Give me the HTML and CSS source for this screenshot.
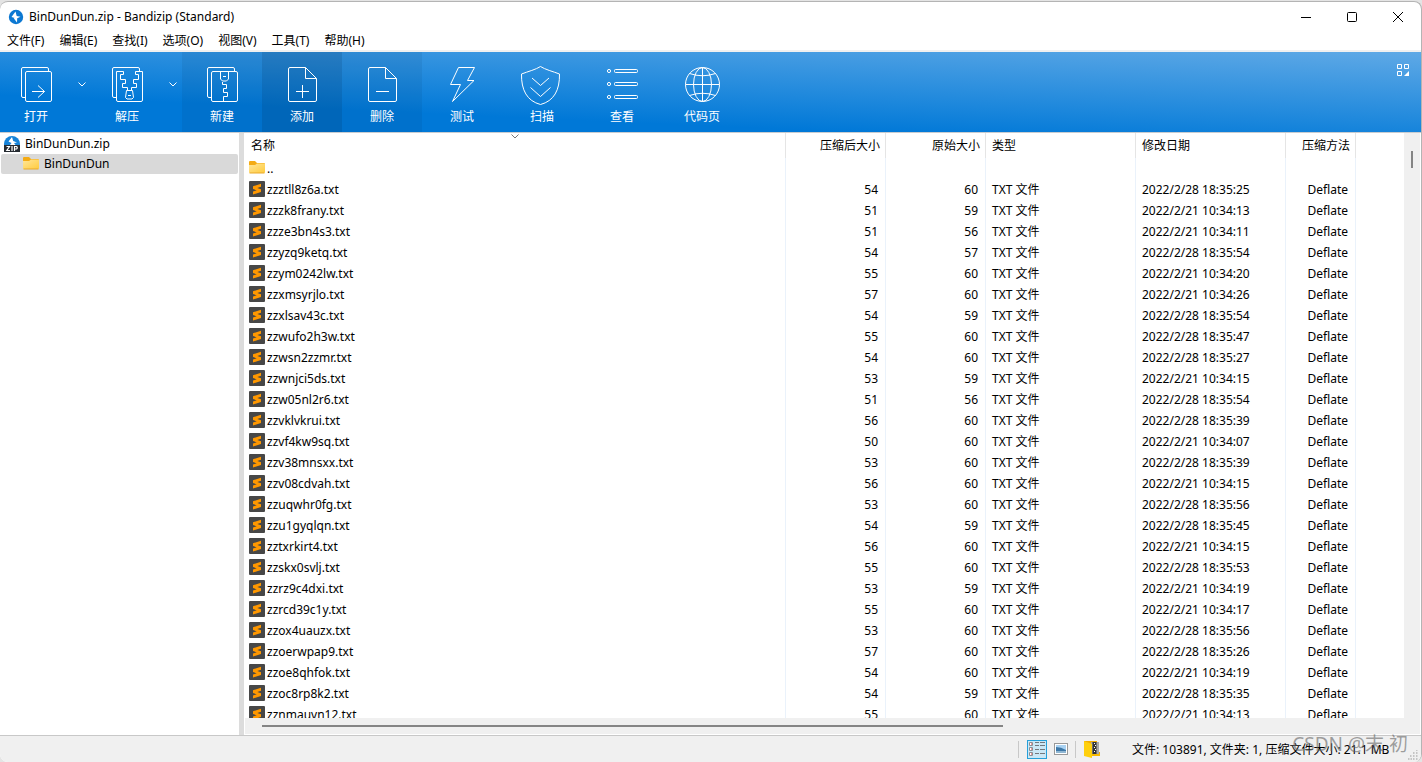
FILE: index.html
```html
<!DOCTYPE html>
<html lang="zh-CN">
<head>
<meta charset="utf-8">
<title>BinDunDun.zip - Bandizip (Standard)</title>
<link rel="stylesheet" href="styles.css">
</head>
<body>
<svg class="defs" aria-hidden="true">
  <defs>
    <linearGradient id="folder-front" x1="0" y1="0" x2="1" y2="1">
      <stop offset="0" stop-color="#ffe69a"/><stop offset="1" stop-color="#ffcb3d"/>
    </linearGradient>
    <symbol id="folder" viewBox="0 0 16 16">
      <path d="M0 2a1 1 0 0 1 1-1h5l2 2h7a1 1 0 0 1 1 1v6H0z" fill="#f4ab14"/>
      <path d="M0 5h6l2-1.500h8V12a1 1 0 0 1-1 1H1a1 1 0 0 1-1-1z" fill="url(#folder-front)"/>
      <path d="M.5 13h15" stroke="#e9a92b"/>
    </symbol>
    <symbol id="sublime" viewBox="0 0 16 16">
      <rect width="16" height="16" rx="1" fill="#474747"/>
      <path d="M4 5.200 12 2.800v3L8.300 7 12 8.200v2.900l-8 2.400v-3l3.700-1.200L4 8.100z" fill="#ff9800"/>
    </symbol>
    <symbol id="bolt" viewBox="0 0 16 16">
      <circle cx="8" cy="8" r="7.200" fill="#0c78d2"/>
      <path d="M7.500 2.500 3.500 8l3.200 1-1 .2L9 13.500l.2-4.300 3.300-1.400-3.800-.8z" fill="#fff"/>
    </symbol>
  </defs>
</svg>

<div class="window">
  <header class="titlebar">
    <svg class="icon16"><use href="#bolt"/></svg>
    <h1 class="title">BinDunDun.zip - Bandizip (Standard)</h1>
    <div class="caption">
      <button class="caption-btn" aria-label="最小化"><svg viewBox="0 0 12 12"><path d="M1 6.500h10"/></svg></button>
      <button class="caption-btn" aria-label="最大化"><svg viewBox="0 0 12 12"><rect x="1.500" y="1.500" width="9" height="9" rx="1"/></svg></button>
      <button class="caption-btn" aria-label="关闭"><svg viewBox="0 0 12 12"><path d="m1 1 10 10M11 1 1 11"/></svg></button>
    </div>
  </header>

  <nav class="menubar">
    <button>文件(F)</button><button>编辑(E)</button><button>查找(I)</button><button>选项(O)</button><button>视图(V)</button><button>工具(T)</button><button>帮助(H)</button>
  </nav>

  <div class="toolbar">
    <button class="tool split">
      <svg viewBox="0 0 40 40"><path d="M9 33.500H7a1.500 1.500 0 0 1-1.500-1.500V5A1.500 1.500 0 0 1 7 3.500h24A1.500 1.500 0 0 1 32.500 5v2"/><rect x="9.500" y="7.500" width="26" height="30" rx="1.500"/><path d="M16 27.500h12.500m-6.500-6 6.500 6-6.500 6"/></svg>
      打开</button>
    <button class="arrow" aria-label="打开选项"><svg viewBox="0 0 8 5"><path d="m.5.5 3.500 3.500 3.500-3.500"/></svg></button>
    <button class="tool split">
      <svg viewBox="0 0 40 40"><path d="M9 33.500H7a1.500 1.500 0 0 1-1.500-1.500V5A1.500 1.500 0 0 1 7 3.500h24A1.500 1.500 0 0 1 32.500 5v2"/><path d="M16.500 7.500H9.500V36a1.500 1.500 0 0 0 1.500 1.500h23a1.500 1.500 0 0 0 1.500-1.500V7.500h-7v3h3v5h-5v4h3v4h-5v3M16.500 7.500v3h-3v5h5v4h-3v4h5v3"/><path d="M19.500 26.500h6l1 7-1.500 1.500h-5L18.500 33.500z"/><path d="M21 31.500h3"/></svg>
      解压</button>
    <button class="arrow" aria-label="解压选项"><svg viewBox="0 0 8 5"><path d="m.5.5 3.500 3.500 3.500-3.500"/></svg></button>
    <button class="tool near">
      <svg viewBox="0 0 40 40"><path d="M9 33.500H7a1.500 1.500 0 0 1-1.500-1.500V5A1.500 1.500 0 0 1 7 3.500h24A1.500 1.500 0 0 1 32.500 5v2"/><rect x="9.500" y="7.500" width="26" height="30" rx="1.500"/><path d="M18.500 8v7l2 2h4l2-2V8M21 12.500h3M20.500 18v2.500h4v4h-3v4h4v4h-4v5"/></svg>
      新建</button>
    <button class="tool hover">
      <svg viewBox="0 0 40 40"><path d="M23.500 3.500H8A1.500 1.500 0 0 0 6.500 5v31A1.500 1.500 0 0 0 8 37.500h25a1.500 1.500 0 0 0 1.500-1.500V14.500zv11h11M20.500 21v13M14 27.500h13"/></svg>
      添加</button>
    <button class="tool near">
      <svg viewBox="0 0 40 40"><path d="M23.500 3.500H8A1.500 1.500 0 0 0 6.500 5v31A1.500 1.500 0 0 0 8 37.500h25a1.500 1.500 0 0 0 1.500-1.500V14.500zv11h11M14 27.500h13"/></svg>
      删除</button>
    <button class="tool">
      <svg viewBox="0 0 40 40"><path d="M16.500 3.500h16l-7 13h6.500l-21.500 21 8-17h-10z"/></svg>
      测试</button>
    <button class="tool">
      <svg viewBox="0 0 40 40"><path d="M18.500 2.500C23 5.500 31 7.500 37.500 10c.3 16-5.500 27-19 30.500C5 37-.8 26-.5 10 6 7.500 14 5.500 18.500 2.500zM10 14l8.500 7.500L27 14M8.500 23.500l10 9 10-9"/></svg>
      扫描</button>
    <button class="tool">
      <svg viewBox="0 0 40 40"><circle cx="7" cy="7" r="1.600"/><circle cx="7" cy="20" r="1.600"/><circle cx="7" cy="33" r="1.600"/><rect x="12.500" y="5.500" width="23" height="3" rx="1"/><rect x="12.500" y="18.500" width="23" height="3" rx="1"/><rect x="12.500" y="31.500" width="23" height="3" rx="1"/></svg>
      查看</button>
    <button class="tool">
      <svg viewBox="0 0 40 40"><circle cx="20.500" cy="20.500" r="17"/><ellipse cx="20.500" cy="20.500" rx="9" ry="17"/><path d="M20.500 3.500v34M3.500 20.500h34M7.500 9.500q13 4.500 26 0M7.500 31.500q13-4.500 26 0"/></svg>
      代码页</button>
    <button class="skin" aria-label="皮肤"><svg viewBox="0 0 12 12"><path d="M.5.5h4v4h-4zM7.500.5h4v4h-4zM.5 7.500h4v4h-4z"/><path class="solid" d="M12 7v5H7z"/></svg></button>
  </div>

  <main class="content">
    <aside class="tree">
      <div class="node">
        <svg class="icon16" viewBox="0 0 16 16"><path d="M0 8a8 8 0 0 1 16 0v1H0z" fill="#1683d8"/><path d="M8 1 4.500 5.500 7.500 7 6 9h5.500L10 7l3-.5-3.800-1.500z" fill="#fff"/><path d="M0 9h16v7H0z" fill="#252a30"/><path d="M2.500 10.500h3L2.800 14.500H6M8 10v5M10.500 15v-4.500h2q1.500 1.200 0 2.500h-2" fill="none" stroke="#fff" stroke-width="1.200"/></svg>
        <span>BinDunDun.zip</span>
      </div>
      <div class="node child"><svg class="icon16"><use href="#folder"/></svg><span>BinDunDun</span></div>
    </aside>
    <section class="list">
      <div class="viewport">
        <table class="files">
          <colgroup><col><col class="c-size"><col class="c-size"><col class="c-date"><col class="c-date"><col class="c-method"><col class="c-rest"></colgroup>
          <thead><tr>
            <th><span>名称</span><svg class="sort" viewBox="0 0 8 5"><path d="m.5.5 3.500 3.500 3.500-3.500"/></svg></th>
            <th class="num">压缩后大小</th><th class="num">原始大小</th><th>类型</th><th>修改日期</th><th class="num">压缩方法</th><th></th>
          </tr></thead>
          <tbody id="rows">
            <tr><td class="name"><svg class="icon16"><use href="#folder"/></svg>..</td><td></td><td></td><td></td><td></td><td></td><td></td></tr>
          </tbody>
        </table>
      </div>
      <div class="vbar"><i class="vthumb"></i></div>
      <div class="hbar"><i class="hthumb"></i></div>
    </section>
  </main>

  <footer class="status">
    <i class="sep"></i>
    <button class="view on" aria-label="详细信息"><svg viewBox="0 0 18 16"><g fill="#fff" stroke="#8b8f94"><path d="M1.500 1.500h3v3h-3zM1.500 6.500h3v3h-3zM1.500 11.500h3v3h-3z"/></g><path d="M7 1.500h4m1 0h5M7 4.500h4m1 0h5M7 8.500h4m1 0h5M7 12.500h4m1 0h5" stroke="#73787d"/><path d="M3 3h1M3 8h1M3 13h1" stroke="#d33"/></svg></button>
    <button class="view" aria-label="缩略图"><svg viewBox="0 0 18 16"><rect x="2.500" y="2.500" width="13" height="11" fill="#fff" stroke="#999"/><path d="M4 4h10v8H4z" fill="#a9d2f2"/><path d="M4 6q5 0 10 3v3H4z" fill="#3d78a8"/><path d="M4 10h10v2H4z" fill="#8fb6d2"/></svg></button>
    <i class="sep"></i>
    <svg class="archive" viewBox="0 0 18 18"><path d="M1 1h13v11h3v4H1z" fill="#f2ad00"/><path d="M8 2h8v12H8z" fill="#a8a8a8"/><path d="M11.500 2v12" stroke="#333" stroke-width="4"/><path d="M11 3.500h1m0 2h1m-2 2h1m0 2h1m-2 2h1" stroke="#fff"/><path d="m1 1 8 3v14l-8-2z" fill="#ffd00d"/><path d="M9 14h8v2H9z" fill="#f7b900"/></svg>
    <span class="summary">文件: 103891, 文件夹: 1, 压缩文件大小: 21.1 MB</span>
    <svg class="grip" viewBox="0 0 10 10"><path d="M8 0h1.500M5 3h1.500M8 3h1.500M2 6h1.500M5 6h1.500M8 6h1.500M0 9h1.500M2.500 9H4M5 9h1.500M8 9h1.500"/></svg>
    <span class="watermark">CSDN @末&nbsp;初</span>
  </footer>
</div>
<script src="files.js"></script>
</body>
</html>
```
FILE: files.js
```js
// name, packed size, original size, day of February 2022, time
const files = `zzztll8z6a 54 60 28 18:35:25
zzzk8frany 51 59 21 10:34:13
zzze3bn4s3 51 56 21 10:34:11
zzyzq9ketq 54 57 28 18:35:54
zzym0242lw 55 60 21 10:34:20
zzxmsyrjlo 57 60 21 10:34:26
zzxlsav43c 54 59 28 18:35:54
zzwufo2h3w 55 60 28 18:35:47
zzwsn2zzmr 54 60 28 18:35:27
zzwnjci5ds 53 59 21 10:34:15
zzw05nl2r6 51 56 28 18:35:54
zzvklvkrui 56 60 28 18:35:39
zzvf4kw9sq 50 60 21 10:34:07
zzv38mnsxx 53 60 28 18:35:39
zzv08cdvah 56 60 21 10:34:15
zzuqwhr0fg 53 60 28 18:35:56
zzu1gyqlqn 54 59 28 18:35:45
zztxrkirt4 56 60 21 10:34:15
zzskx0svlj 55 60 28 18:35:53
zzrz9c4dxi 53 59 21 10:34:19
zzrcd39c1y 55 60 21 10:34:17
zzox4uauzx 53 60 28 18:35:56
zzoerwpap9 57 60 28 18:35:26
zzoe8qhfok 54 60 21 10:34:19
zzoc8rp8k2 54 59 28 18:35:35
zznmauvn12 55 60 21 10:34:13`;

const rows = files.split('\n').map(line => {
  const [name, packed, size, day, time] = line.split(' ');
  return `<tr><td class="name"><svg class="icon16"><use href="#sublime"/></svg>${name}.txt</td>
    <td class="num">${packed}</td><td class="num">${size}</td><td>TXT 文件</td>
    <td>2022/2/${day} ${time}</td><td class="num">Deflate</td><td></td></tr>`;
});
document.getElementById('rows').insertAdjacentHTML('beforeend', rows.join(''));
```
FILE: styles.css
```css
* { box-sizing: border-box; }
html, body { height: 100%; }
body {
  margin: 0;
  padding-top: 1px;
  background: #e4e4e4;
  color: #000;
  font: 12px/16px "Noto Sans", "Noto Sans CJK SC", sans-serif;
  overflow: hidden;
}
button { border: 0; padding: 0; background: none; color: inherit; font: inherit; }
svg { display: block; flex: none; }
.defs { position: absolute; width: 0; height: 0; }
.icon16 { width: 16px; height: 16px; }

.window {
  display: flex;
  flex-direction: column;
  height: 100%;
  border: 1px solid #b4b4b4;
  border-width: 1px 1px 0 0;
  border-radius: 8px;
  background: #fff;
  overflow: hidden;
}

.titlebar { display: flex; align-items: center; height: 29px; padding-left: 8px; flex: none; }
.title { margin: 0 0 0 5px; font: inherit; flex: 1; }
.caption { display: flex; }
.caption-btn { width: 46px; height: 29px; display: grid; place-items: center; }
.caption-btn svg { width: 12px; height: 12px; fill: none; stroke: #000; }

.menubar {
  display: flex;
  align-items: center;
  gap: 15px;
  height: 21px;
  padding-left: 7px;
  border-bottom: 2px solid #f0f0f0;
  flex: none;
}

.toolbar {
  display: flex;
  height: 81px;
  border-bottom: 1px solid #c8ccd0;
  background: linear-gradient(2.5deg, #0078d7 26%, #1c87dc 48%, #5fa9e6);
  color: #fff;
  flex: none;
}
.tool { display: flex; flex-direction: column; align-items: center; gap: 5px; width: 80px; padding-top: 12px; }
.tool.split { width: 72px; }
.tool svg { width: 40px; height: 40px; overflow: visible; fill: none; stroke: #fff; }
.tool.near { background: rgba(0, 40, 80, .08); }
.tool.hover { background: rgba(0, 40, 80, .22); }
.arrow { display: flex; justify-content: center; width: 19px; padding-top: 30px; }
.arrow svg, .sort { width: 8px; height: 5px; fill: none; stroke: #fff; }
.skin { margin: 12px 12px 0 auto; align-self: flex-start; }
.skin svg { width: 12px; height: 12px; fill: none; stroke: #fff; }
.skin .solid { fill: #fff; stroke: none; }

.content { display: flex; flex: 1; min-height: 0; }
.tree { width: 244px; border-right: 5px solid #dcdcdc; padding: 1px 1px 0; flex: none; }
.node { display: flex; align-items: center; gap: 5px; height: 20px; padding-left: 3px; border-radius: 2px; }
.node.child { padding-left: 22px; background: #d9d9d9; }

.list {
  display: grid;
  grid-template: minmax(0, 1fr) 16px / minmax(0, 1fr) 16px;
  flex: 1;
  min-width: 0;
  padding: 0 1px 1px 1px;
}
.viewport { overflow: hidden; }
.files { width: 100%; table-layout: fixed; border-collapse: separate; border-spacing: 0; }
.c-size { width: 100px; }
.c-date { width: 150px; }
.c-method { width: 70px; }
.c-rest { width: 48px; }
th, td { padding: 0 6px; text-align: left; white-space: nowrap; font-weight: 400; border-right: 1px solid #eaf2fb; }
th { position: relative; height: 25px; border-color: #e5e5e5; }
th:last-child, td:last-child { border: 0; }
td { height: 21px; }
.num { text-align: right; }
th.num { padding-right: 5px; }
td.num { padding-right: 7px; }
.name { display: flex; gap: 2px; padding-left: 4px; line-height: 21px; }
.name svg { margin-top: 2px; }
.sort { position: absolute; top: 1px; left: calc(50% - 4px); stroke: #777; }
.vbar, .hbar { background: #f0f0f0; }
.hbar { grid-column: 1 / 3; display: flex; align-items: center; padding-left: 17px; }
.vbar { display: flex; justify-content: center; padding-top: 18px; }
.vthumb { width: 2px; height: 17px; background: #858585; }
.hthumb { width: 64%; height: 2px; background: #858585; }

.status {
  position: relative;
  display: flex;
  align-items: center;
  height: 27px;
  padding-right: 3px;
  border-top: 1px solid #c8c8c8;
  background: #f0f0f0;
  justify-content: flex-end;
  flex: none;
}
.sep { width: 1px; height: 17px; background: #c8c8c8; }
.view { display: grid; place-items: center; width: 20px; height: 19px; margin-left: 4px; }
.sep + .view { margin-left: 8px; }
.view.on { border: 1px solid #26a0da; background: #cbe8f6; }
.view svg { width: 18px; height: 16px; fill: none; }
.view + .sep { margin-left: 4px; }
.archive { width: 18px; height: 18px; margin: 0 31px 0 7px; }
.summary { min-width: 264px; margin-right: 12px; padding-top: 2px; }
.grip { width: 10px; height: 10px; align-self: flex-end; margin-bottom: 2px; fill: none; stroke: #999; }
.watermark {
  position: absolute;
  right: 13px;
  top: -4px;
  font-size: 19px;
  line-height: 24px;
  color: rgba(100, 100, 100, .6);
}
```
